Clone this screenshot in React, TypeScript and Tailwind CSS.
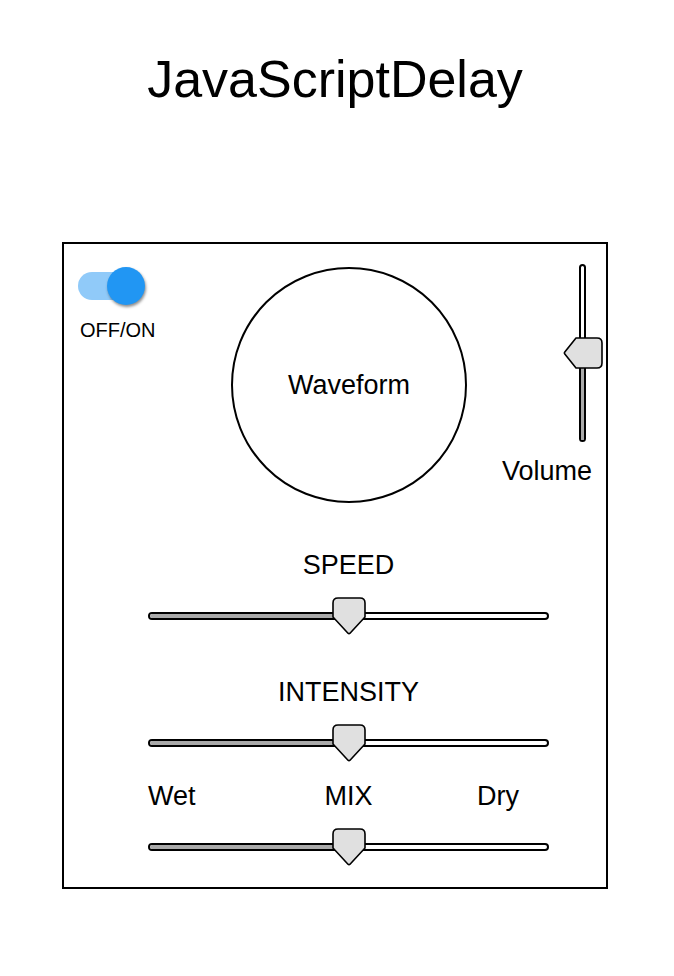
import React from "react";

const font = { fontFamily: '"Liberation Sans", Arial, Helvetica, sans-serif' };

function HThumb() {
  return (
    <svg width="34" height="38" viewBox="0 0 34 38" className="block">
      <path
        d="M6 1H28Q33 1 33 6V20L18 36.2Q17 37.2 16 36.2L1 20V6Q1 1 6 1Z"
        fill="#e0e0e0"
        stroke="#000"
        strokeWidth="1.6"
        strokeLinejoin="round"
      />
    </svg>
  );
}

function VThumb() {
  return (
    <svg width="40" height="32" viewBox="0 0 40 32" className="block">
      <path
        d="M13 1H34Q39 1 39 6V26Q39 31 34 31H13L1.8 17Q1 16 1.8 15Z"
        fill="#e0e0e0"
        stroke="#000"
        strokeWidth="1.6"
        strokeLinejoin="round"
      />
    </svg>
  );
}

function HSlider({ value }: { value: number }) {
  return (
    <div className="relative h-[38px] w-[401px] pt-[15px]">
      <div className="h-[8px] w-full overflow-hidden rounded-full border-2 border-black bg-white">
        <div className="h-full bg-[#a9a9a9]" style={{ width: `${value}%` }} />
      </div>
      <div
        className="absolute top-0 -translate-x-1/2"
        style={{ left: `${value}%` }}
      >
        <HThumb />
      </div>
    </div>
  );
}

function VSlider({ value }: { value: number }) {
  return (
    <div className="relative h-[178px] w-[40px] pl-[16px]">
      <div className="flex h-full w-[7px] flex-col justify-end overflow-hidden rounded-full border-2 border-black bg-white">
        <div className="w-full bg-[#a9a9a9]" style={{ height: `${value}%` }} />
      </div>
      <div
        className="absolute left-0 translate-y-1/2"
        style={{ bottom: `${value}%` }}
      >
        <VThumb />
      </div>
    </div>
  );
}

export default function App() {
  return (
    <div className="min-h-[976px] w-[670px] bg-white text-black" style={font}>
      <h1 className="pt-[53px] text-center text-[52px] leading-none">
        JavaScriptDelay
      </h1>

      <div className="mx-auto mt-[137px] h-[647px] w-[546px] border-2 border-black">
        <div className="flex items-start">
          <div className="w-[167px] pl-[14px] pt-[23px]">
            <div className="relative h-[38px] w-[67px] pt-[5px]">
              <div className="h-[28px] w-[65px] rounded-full bg-[#90caf9]" />
              <div className="absolute right-0 top-0 h-[38px] w-[38px] rounded-full bg-[#2196f3] shadow-[1px_2px_3px_rgba(0,0,0,0.45)]" />
            </div>
            <div className="ml-[2px] mt-[15px] text-[20px] leading-none">
              OFF/ON
            </div>
          </div>

          <div className="mt-[23px] flex h-[236px] w-[236px] items-center justify-center rounded-full border-2 border-black">
            <span className="text-[27px] leading-none">Waveform</span>
          </div>

          <div className="flex w-[139px] flex-col items-end pt-[20px]">
            <div className="mr-[3px]">
              <VSlider value={50} />
            </div>
            <div className="mr-[14px] mt-[16px] text-[27px] leading-none">
              Volume
            </div>
          </div>
        </div>

        <div className="ml-[84px] w-[401px]">
          <div className="mt-[49px] text-center text-[27px] leading-none">
            SPEED
          </div>
          <div className="mt-[18px]">
            <HSlider value={50} />
          </div>

          <div className="mt-[44px] text-center text-[27px] leading-none">
            INTENSITY
          </div>
          <div className="mt-[18px]">
            <HSlider value={50} />
          </div>

          <div className="mt-[21px] grid grid-cols-3 text-[27px] leading-none">
            <span>Wet</span>
            <span className="text-center">MIX</span>
            <span className="pr-[30px] text-right">Dry</span>
          </div>
          <div className="mt-[18px]">
            <HSlider value={50} />
          </div>
        </div>
      </div>
    </div>
  );
}
